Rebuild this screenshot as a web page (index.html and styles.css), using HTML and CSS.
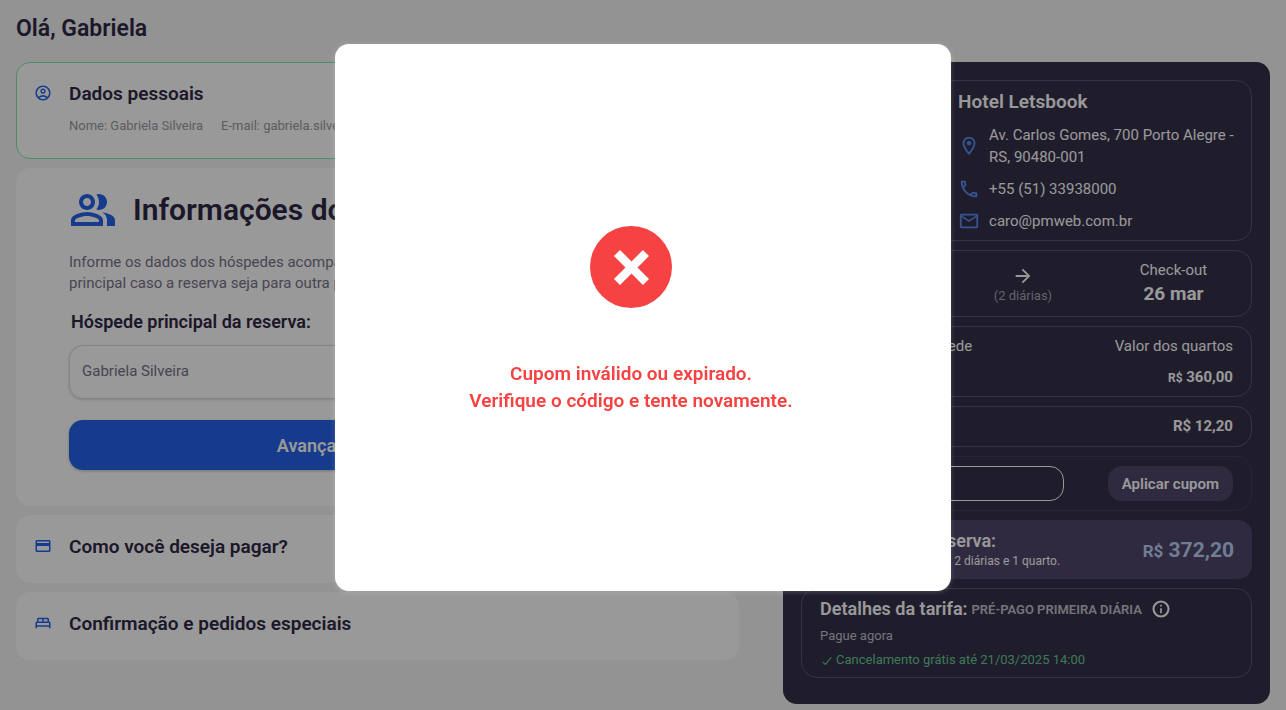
FILE: index.html
```
<!DOCTYPE html>
<html lang="pt-BR">
<head>
  <meta charset="UTF-8">
  <meta name="viewport" content="width=device-width, initial-scale=1.0">
  <title>Reserva - Hotel Letsbook</title>
  <link rel="stylesheet" href="styles.css">
</head>
<body>
  <main class="checkout">
    <h1>Olá, Gabriela</h1>

    <div class="columns">
      <div class="steps">
        <section class="card step done">
          <svg class="step-icon" viewBox="0 0 24 24"><path d="M12 2C6.48 2 2 6.48 2 12s4.48 10 10 10 10-4.48 10-10S17.52 2 12 2zM7.35 18.5C8.66 17.56 10.26 17 12 17s3.34.56 4.65 1.5c-1.31.94-2.91 1.5-4.65 1.5s-3.34-.56-4.65-1.5zm10.79-1.38a9.95 9.95 0 0 0-12.28 0A7.96 7.96 0 0 1 4 12c0-4.42 3.58-8 8-8s8 3.58 8 8c0 1.95-.7 3.73-1.86 5.12z"/><path d="M12 6c-1.93 0-3.5 1.57-3.5 3.5S10.07 13 12 13s3.5-1.57 3.5-3.5S13.93 6 12 6zm0 5c-.83 0-1.5-.67-1.5-1.5S11.17 8 12 8s1.5.67 1.5 1.5S12.83 11 12 11z"/></svg>
          <div>
            <h2>Dados pessoais</h2>
            <p class="personal">
              <span>Nome: Gabriela Silveira</span>
              <span>E-mail: gabriela.silveira@pmweb.com.br</span>
            </p>
          </div>
        </section>

        <section class="card guests">
          <div class="guests-title">
            <svg viewBox="0 0 24 24"><path d="M16.67 13.13C18.04 14.06 19 15.32 19 17v3h4v-3c0-2.18-3.57-3.47-6.33-3.87z"/><path d="M15 12c2.21 0 4-1.79 4-4s-1.79-4-4-4c-.47 0-.91.1-1.33.24C14.5 5.27 15 6.58 15 8s-.5 2.73-1.33 3.76c.42.14.86.24 1.33.24z"/><path d="M9 12c2.21 0 4-1.79 4-4s-1.79-4-4-4-4 1.79-4 4 1.79 4 4 4zm0-6c1.1 0 2 .9 2 2s-.9 2-2 2-2-.9-2-2 .9-2 2-2z"/><path d="M9 13c-2.67 0-8 1.34-8 4v3h16v-3c0-2.66-5.33-4-8-4zm6 5H3v-.99C3.2 16.29 6.3 15 9 15s5.8 1.29 6 2v1z"/></svg>
            <h2>Informações dos hóspedes</h2>
          </div>
          <p class="guests-text">Informe os dados dos hóspedes acompanhantes e altere o hóspede<br>principal caso a reserva seja para outra pessoa.</p>
          <form>
            <label for="guest">Hóspede principal da reserva:</label>
            <input id="guest" type="text" value="Gabriela Silveira">
            <button class="next" type="button">Avançar para pagamento</button>
          </form>
        </section>

        <section class="card step">
          <svg class="step-icon" viewBox="0 0 24 24"><path d="M20 4H4c-1.11 0-1.99.89-1.99 2L2 18c0 1.11.89 2 2 2h16c1.11 0 2-.89 2-2V6c0-1.11-.89-2-2-2zm0 14H4v-6h16v6zm0-10H4V6h16v2z"/></svg>
          <h2>Como você deseja pagar?</h2>
        </section>

        <section class="card step">
          <svg class="step-icon" viewBox="0 0 24 24"><path d="M22 12c0-1.1-.9-2-2-2V7c0-1.1-.9-2-2-2H6c-1.1 0-2 .9-2 2v3c-1.1 0-2 .9-2 2v7h2v-2h16v2h2v-7zm-4-2h-5V7h5v3zM6 7h5v3H6V7zm-2 5h16v3H4v-3z"/></svg>
          <h2>Confirmação e pedidos especiais</h2>
        </section>
      </div>

      <aside class="summary">
        <section class="box hotel">
          <div class="hotel-photo"></div>
          <div class="hotel-info">
            <h2>Hotel Letsbook</h2>
            <ul>
              <li>
                <svg viewBox="0 0 24 24"><path d="M12 2C8.13 2 5 5.13 5 9c0 5.25 7 13 7 13s7-7.75 7-13c0-3.87-3.13-7-7-7zM7 9c0-2.76 2.24-5 5-5s5 2.24 5 5c0 2.88-2.88 7.19-5 9.88C9.92 16.21 7 11.85 7 9z"/><circle cx="12" cy="9" r="2.5"/></svg>
                <span>Av. Carlos Gomes, 700 Porto Alegre - RS, 90480-001</span>
              </li>
              <li>
                <svg viewBox="0 0 24 24"><path d="M6.54 5c.06.89.21 1.76.45 2.59l-1.2 1.2c-.41-1.2-.67-2.47-.76-3.79h1.51m9.86 12.02c.85.24 1.72.39 2.6.45v1.49c-1.32-.09-2.59-.35-3.8-.75l1.2-1.19M7.5 3H4c-.55 0-1 .45-1 1 0 9.39 7.61 17 17 17 .55 0 1-.45 1-1v-3.49c0-.55-.45-1-1-1-1.24 0-2.45-.2-3.57-.57-.1-.04-.21-.05-.31-.05-.26 0-.51.1-.71.29l-2.2 2.2c-2.83-1.45-5.15-3.76-6.59-6.59l2.2-2.2c.28-.28.36-.67.25-1.02C8.7 6.45 8.5 5.25 8.5 4c0-.55-.45-1-1-1z"/></svg>
                <span>+55 (51) 33938000</span>
              </li>
              <li>
                <svg viewBox="0 0 24 24"><path d="M22 6c0-1.1-.9-2-2-2H4c-1.1 0-2 .9-2 2v12c0 1.1.9 2 2 2h16c1.1 0 2-.9 2-2V6zm-2 0l-8 5-8-5h16zm0 12H4V8l8 5 8-5v10z"/></svg>
                <span>caro@pmweb.com.br</span>
              </li>
            </ul>
          </div>
        </section>

        <section class="box dates">
          <div class="date">Check-in <strong>24 mar</strong></div>
          <div class="nights">
            <svg viewBox="0 0 24 24"><path d="M12 4l-1.41 1.41L16.17 11H4v2h12.17l-5.58 5.59L12 20l8-8z"/></svg>
            (2 diárias)
          </div>
          <div class="date">Check-out <strong>26 mar</strong></div>
        </section>

        <section class="box rooms">
          <div class="row"><span>Quarto para o hóspede</span><span>Valor dos quartos</span></div>
          <div class="row"><span>Quarto</span><strong><small>R$</small> 360,00</strong></div>
        </section>

        <section class="box taxes row">
          <span>Taxas</span><strong>R$ 12,20</strong>
        </section>

        <form class="box coupon row">
          <input type="text" aria-label="Cupom">
          <button type="button">Aplicar cupom</button>
        </form>

        <section class="total row">
          <div>
            <h3>Valor total da reserva:</h3>
            <p>Valor total referente para 2 diárias e 1 quarto.</p>
          </div>
          <strong><small>R$</small> 372,20</strong>
        </section>

        <section class="box fare">
          <div class="fare-title">
            <h3>Detalhes da tarifa:</h3>
            <span>PRÉ-PAGO PRIMEIRA DIÁRIA</span>
            <svg viewBox="0 0 24 24"><path d="M11 7h2v2h-2zm0 4h2v6h-2z"/><circle cx="12" cy="12" r="9" fill="none" stroke="currentColor" stroke-width="2.5"/></svg>
          </div>
          <p>Pague agora</p>
          <p class="free-cancel"><svg viewBox="0 0 16 16"><path d="M3 10l3 3 7-8" fill="none" stroke="currentColor" stroke-width="1.2"/></svg>Cancelamento grátis até 21/03/2025 14:00</p>
        </section>
      </aside>
    </div>
  </main>

  <div class="overlay">
    <div class="modal" role="alertdialog" aria-labelledby="modalText">
      <svg viewBox="0 0 82 82"><circle cx="41" cy="41" r="41" fill="#f64242"/><path d="M27 27l29 29M56 27l-29 29" stroke="#fff" stroke-width="8.5"/></svg>
      <p id="modalText">Cupom inválido ou expirado.<br>Verifique o código e tente novamente.</p>
    </div>
  </div>
</body>
</html>
```

FILE: styles.css
```
* {
  box-sizing: border-box;
}
body {
  margin: 0;
  font-family: Roboto, sans-serif;
  font-size: 15px;
  color: #2f2845;
  background-color: #f5f5f5;
}
h1, h2, h3, p, ul {
  margin: 0;
  padding: 0;
}
h1, h2, h3 {
  font-weight: 600;
}
svg {
  display: block;
  flex-shrink: 0;
  fill: currentColor;
}
input, button {
  font-family: inherit;
}
.checkout {
  padding: 15px 16px 0;
}
h1 {
  font-size: 23px;
  line-height: 28px;
  margin-bottom: 19px;
}
.columns {
  display: grid;
  grid-template-columns: 1.485fr 1fr;
  gap: 44px;
  align-items: start;
}

/* steps on the left */
.steps {
  display: flex;
  flex-direction: column;
  gap: 9px;
}
.card {
  background-color: #fff;
  border: 1px solid #fff;
  border-radius: 14px;
}
.step {
  display: flex;
  gap: 17px;
  padding: 19px 17px 23px;
}
.step.done {
  border-color: #7fecb6;
}
.step-icon {
  width: 18px;
  height: 18px;
  margin-top: 2px;
  color: #2563eb;
}
.step h2 {
  font-size: 19px;
  line-height: 24px;
}
.personal {
  display: flex;
  gap: 18px;
  margin-top: 11px;
  font-size: 13px;
  line-height: 18px;
  color: #9a9a9f;
}
.guests {
  padding: 17px 52px 35px;
}
.guests-title {
  display: flex;
  align-items: center;
  gap: 16px;
}
.guests-title svg {
  width: 48px;
  height: 48px;
  color: #2563eb;
}
.guests-title h2 {
  font-size: 30px;
  line-height: 40px;
}
.guests-text {
  margin-top: 18px;
  line-height: 21px;
  color: #77738a;
}
.guests label {
  display: block;
  margin: 16px 2px 11px;
  font-size: 18px;
  line-height: 24px;
  font-weight: 600;
}
.guests input {
  display: block;
  width: 100%;
  height: 54px;
  padding: 0 12px 2px;
  font-size: 15px;
  color: #77738a;
  background-color: #fff;
  border: 1px solid #dcdcdc;
  border-radius: 14px;
  box-shadow: 0 1px 3px rgba(0, 0, 0, 0.15);
}
.next {
  display: block;
  width: 100%;
  height: 50px;
  margin-top: 21px;
  font-size: 18px;
  font-weight: 600;
  color: #fff;
  background-color: #2563eb;
  border: 0;
  border-radius: 14px;
  box-shadow: 0 1px 3px rgba(0, 0, 0, 0.25);
}

/* booking summary */
.summary {
  display: flex;
  flex-direction: column;
  gap: 9px;
  padding: 18px 18px 26px;
  color: #fff;
  background-color: #352f4a;
  border-radius: 14px;
}
.box {
  padding: 8px 18px;
  border: 1px solid #5b556f;
  border-radius: 16px;
}
.row {
  display: flex;
  justify-content: space-between;
  align-items: center;
}
.hotel {
  display: flex;
  gap: 16px;
  padding: 0 10px 0 0;
}
.hotel-photo {
  width: 140px;
  flex-shrink: 0;
  background-color: #4f466b;
  border-radius: 15px 0 0 15px;
}
.hotel-info {
  padding: 9px 0 8px;
}
.hotel h2 {
  font-size: 19px;
  line-height: 24px;
}
.hotel ul {
  display: flex;
  flex-direction: column;
  gap: 10px;
  margin-top: 10px;
  list-style: none;
}
.hotel li {
  display: flex;
  align-items: center;
  gap: 9px;
  line-height: 22px;
}
.hotel svg {
  width: 22px;
  height: 22px;
  color: #5b8def;
}
.dates {
  display: flex;
  justify-content: space-around;
  padding: 8px 0 9px;
  text-align: center;
}
.date {
  line-height: 22px;
}
.date strong {
  display: block;
  font-size: 19px;
  line-height: 26px;
}
.nights {
  padding-top: 6px;
  font-size: 13px;
  line-height: 18px;
  color: #a7a4b3;
}
.nights svg {
  width: 22px;
  height: 22px;
  margin: 0 auto;
  color: #fff;
}
.rooms {
  display: grid;
  gap: 9px;
  padding-bottom: 7px;
  line-height: 22px;
}
.rooms small {
  font-size: 12px;
}
.taxes {
  line-height: 23px;
}
.coupon {
  padding: 9px 18px;
  border-color: #453f5b;
}
.coupon input {
  width: 244px;
  height: 35px;
  padding: 0 12px;
  color: #fff;
  background: transparent;
  border: 1px solid #fff;
  border-radius: 14px;
}
.coupon button {
  height: 35px;
  padding: 0 14px;
  font-size: 15px;
  font-weight: 600;
  color: #fff;
  background-color: #4f466b;
  border: 0;
  border-radius: 14px;
}
.total {
  padding: 9px 18px;
  background-color: #4f466b;
  border-radius: 14px;
}
.total h3 {
  font-size: 18px;
  line-height: 23px;
}
.total p {
  font-size: 12px;
  line-height: 18px;
}
.total strong {
  font-size: 21px;
  color: #bcd0f5;
}
.total small {
  font-size: 17px;
}
.fare {
  padding: 8px 18px;
  font-size: 13px;
  color: #c4c2cc;
}
.fare-title {
  display: flex;
  align-items: center;
  gap: 4px;
  font-weight: 600;
}
.fare-title h3 {
  font-size: 18px;
  line-height: 24px;
  color: #fff;
}
.fare-title svg {
  width: 20px;
  height: 20px;
  margin-left: 5px;
  color: #fff;
}
.fare p {
  margin-top: 5px;
  line-height: 19px;
}
.free-cancel {
  display: flex;
  align-items: center;
  gap: 2px;
  color: #66cc91;
}
.free-cancel svg {
  width: 14px;
  height: 14px;
}

/* coupon error */
.overlay {
  position: fixed;
  inset: 0;
  display: flex;
  justify-content: center;
  align-items: flex-start;
  padding-top: 44px;
  background-color: rgba(0, 0, 0, 0.4);
}
.modal {
  display: flex;
  flex-direction: column;
  align-items: center;
  width: 616px;
  max-width: 100%;
  padding: 182px 24px 177px 0;
  background-color: #fff;
  border-radius: 14px;
  box-shadow: 0 1px 5px rgba(255, 255, 255, 0.2);
}
.modal svg {
  width: 82px;
  height: 82px;
}
.modal p {
  margin-top: 52px;
  font-size: 19px;
  line-height: 27px;
  font-weight: 600;
  text-align: center;
  color: #f64242;
}
```
